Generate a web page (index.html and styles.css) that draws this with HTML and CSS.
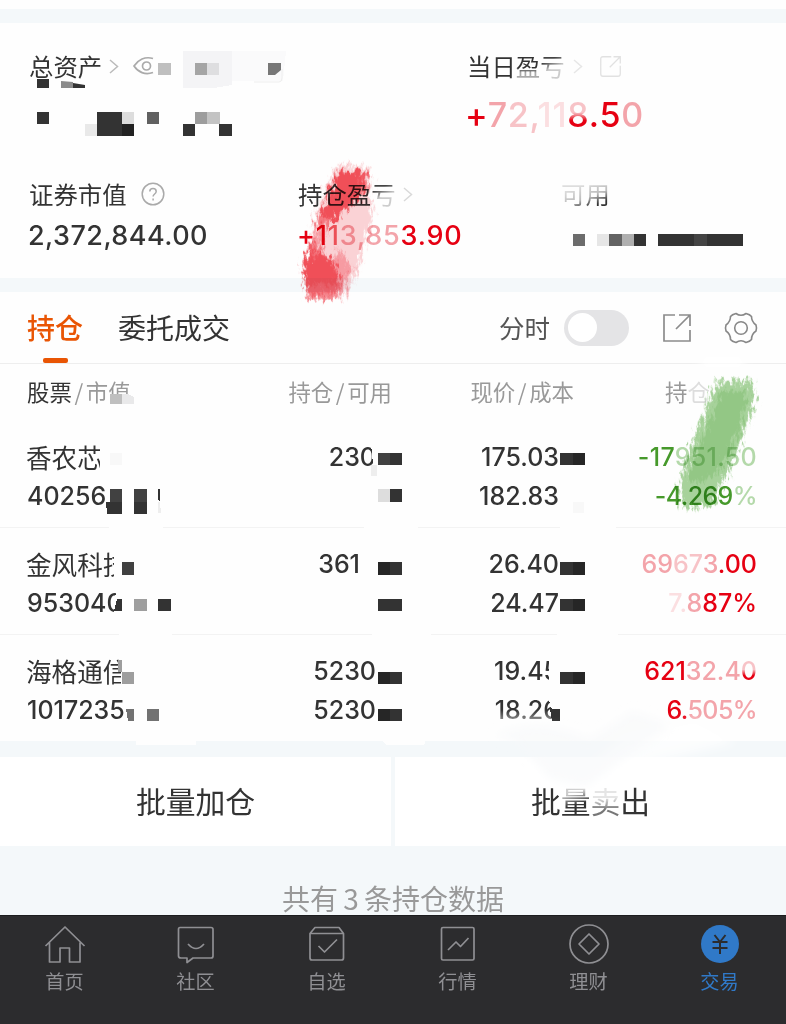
FILE: index.html
```html
<!DOCTYPE html>
<html lang="zh-CN">
<head>
<meta charset="utf-8">
<title>持仓</title>
<link rel="stylesheet" href="styles.css">
</head>
<body>
<main class="page">
  <section class="summary">
    <div class="total">
      <div class="cell">
        <div class="label">总资产
          <svg class="chev" width="10" height="15" viewBox="0 0 10 15"><path d="M1 1l7.5 6.5L1 14"/></svg>
          <svg class="eye" width="21" height="20" viewBox="0 0 21 20"><path d="M20 2.500C12 0 5 4 1 10c4 6 11 9.500 19 6.500"/><circle cx="13.500" cy="10" r="4"/></svg>
        </div>
      </div>
      <div class="cell">
        <div class="label"><span>当日</span><span class="erase-a">盈</span><span class="erase-b">亏</span>
          <svg class="chev faint" width="10" height="15" viewBox="0 0 10 15"><path d="M1 1l7.500 6.500L1 14"/></svg>
          <svg class="open faint" width="21" height="21" viewBox="0 0 28 28"><path d="M15 1H4q-3 0-3 3v20q0 3 3 3h20q3 0 3-3V13M13 15L27 1M18 1h9v9"/></svg>
        </div>
        <div class="big red">+<i class="r2">7</i><i class="r3">2,</i><i class="r4">11</i><i class="fall">8</i>.5<i class="r2">0</i></div>
      </div>
    </div>
    <div class="parts">
      <div class="cell">
        <div class="label">证券市值
          <svg class="help" width="24" height="24" viewBox="0 0 24 24"><circle cx="12" cy="12" r="10.800"/><path d="M8.800 9.500c0-4 6.400-4 6.400 0 0 2.500-3.100 2.500-3.100 5M12.100 16.500v2"/></svg>
        </div>
        <div class="amount">2,372,844.00</div>
      </div>
      <div class="cell">
        <div class="label">持仓盈<span class="erase-b">亏</span>
          <svg class="chev pale" width="10" height="15" viewBox="0 0 10 15"><path d="M1 1l7.500 6.500L1 14"/></svg>
        </div>
        <div class="amount red">+1<i class="r1">1</i><i class="r2">3,85</i>3.90</div>
      </div>
      <div class="cell">
        <div class="label"><span class="erase-c">可用</span></div>
      </div>
    </div>
  </section>

  <section class="holdings">
    <header class="tabs">
      <div class="tab active">持仓</div>
      <div class="tab">委托成交</div>
      <div class="tools">
        <span class="tool-label">分时</span>
        <span class="toggle"><span class="knob"></span></span>
        <svg class="open" width="28" height="28" viewBox="0 0 28 28"><path d="M12 1H1v26h26V16M27 12V1H16M13 15L27 1"/></svg>
        <svg class="gear" width="34" height="32" viewBox="0 0 34 32"><path d="M12 1.500Q17 5 22 1.500Q26 2.500 27.500 4.500Q27.500 9.500 32 13Q33 16 32 19Q27.500 22 27.500 27.500Q26 29.500 22 30.500Q17 27 12 30.500Q8 29.500 6.500 27.500Q6.500 22 2 19Q1 16 2 13Q6.500 9.500 6.500 4.500Q8 2.500 12 1.500Z"/><circle cx="17" cy="16" r="6.300"/></svg>
      </div>
    </header>
    <div class="row head">
      <div><b>股票</b><s>/</s>市值</div><div>持仓<s>/</s>可用</div><div>现价<s>/</s>成本</div><div>持<i class="ghost">仓</i></div>
    </div>
    <div class="row">
      <div><p class="name">香农芯</p><p>40256</p></div>
      <div><p>230</p></div>
      <div><p>175.03</p><p>182.83</p></div>
      <div class="green"><p class="wide">-17<i class="g2">951.50</i></p><p class="tight">-4.269<i class="g2">%</i></p></div>
    </div>
    <div class="row">
      <div><p class="name">金风科技</p><p>953040</p></div>
      <div><p class="short">361</p></div>
      <div><p>26.40</p><p>24.47</p></div>
      <div class="red"><p><i class="r2">69</i><i class="r3">67</i><i class="r2">3</i>.00</p><p><i class="r4">7.</i><i class="r2">8</i>87%</p></div>
    </div>
    <div class="row">
      <div><p class="name">海格通信</p><p>1017235</p></div>
      <div><p>5230</p><p>5230</p></div>
      <div><p>19.45</p><p class="fade-down">18.26</p></div>
      <div class="red"><p>621<i class="r2">32.4</i><i class="fall">0</i></p><p class="tight">6.<i class="r2">505%</i></p></div>
    </div>
  </section>

  <section class="actions">
    <div class="action">批量加仓</div>
    <div class="action">批<span class="erase-d">量</span><span class="erase-e">卖</span>出</div>
  </section>
  <p class="count">共有<span>3</span>条持仓数据</p>

  <nav class="nav">
    <div class="item"><svg width="42" height="42" viewBox="0 0 42 42"><path d="M1.500 22L21 3l19.500 19M5.500 18.500V38h10.500V24h9.500v14H36V18.500"/></svg>首页</div>
    <div class="item"><svg width="42" height="42" viewBox="0 0 42 42"><path d="M5 3.500h31q2 0 2 2v26.500q0 2-2 2H18l-6 4.500V34H6q-2.500 0-2.500-2V5.500q0-2 1.500-2zM13 20q8 9 16 0"/></svg>社区</div>
    <div class="item"><svg width="42" height="42" viewBox="0 0 42 42"><path d="M9 3.500h24l4.500 6V34q0 2-2 2H6q-2 0-2-2V9.500zM4 9.500h33.500M12.500 22l6 6L31 15.500"/></svg>自选</div>
    <div class="item"><svg width="42" height="42" viewBox="0 0 42 42"><rect x="4.500" y="3.500" width="32.500" height="32.500" rx="1.500"/><path d="M11 26l8-8 4.500 4.500L31.500 14"/></svg>行情</div>
    <div class="item"><svg width="42" height="42" viewBox="0 0 42 42"><circle cx="21" cy="20" r="19"/><path d="M21 10l10 10-10 10-10-10z"/></svg>理财</div>
    <div class="item on"><svg width="42" height="42" viewBox="0 0 42 42"><circle class="disc" cx="21" cy="20" r="19"/><path class="yen" d="M15.500 11l5.500 7 5.500-7M21 18v12M13.500 18h15M13.500 24h15"/></svg>交易</div>
  </nav>

  <!-- Redaction blocks and brush marks lie over the content -->
  <svg class="marks" width="786" height="1024" viewBox="0 0 786 1024">
    <defs>
      <filter id="soft"><feGaussianBlur stdDeviation="5"/></filter>
    </defs>
    <g shape-rendering="crispEdges">
      <path fill="#f4f4f6" d="M183 51h49v34l-18 3h-31z"/><path fill="#fafafb" d="M232 51h54l-3 30h-51z"/>
      <path fill="#bfbfbf" d="M158 63h13v12h-13z"/><path fill="#a5a5a5" d="M195 63h12v12h-12z"/><path fill="#dedee0" d="M207 63h12v12h-12z"/>
      <path fill="#333" d="M37 79h12v9H37zM37 112h12v12H37zM97 112h25v24H97zM183 124h12v12h-12zM219 124h13v12h-13z"/>
      <path fill="#222" d="M122 124h12v12h-12z"/><path fill="#ddd" d="M122 112h12v12h-12z"/><path fill="#e9e9e9" d="M85 124h12v12H85z"/>
      <path fill="#616161" d="M147 112h12v12h-12z"/><path fill="#9d9d9d" d="M195 112h12v12h-12z"/><path fill="#c3c3c3" d="M207 112h13v12h-13z"/>
      <path fill="#6c6c6c" d="M573 234h12v12h-12z"/><path fill="#e6e6e6" d="M597 234h12v12h-12z"/><path fill="#636363" d="M609 234h13v12h-13z"/><path fill="#afafaf" d="M622 234h12v12h-12z"/>
      <path fill="#333" d="M634 234h12v12h-12zM658 234h85v12h-85z"/><path fill="#444" d="M694 234h13v12h-13z"/>

      <path fill="#fefefe" d="M100 464l2 18h20v-35h-22v10zM371 444h8v30h-5zM107 502l12-17h44v30h-53zM109 520h54v12h-54zM364 520h54v12h-54zM560 520h56v12h-56zM119 627h53v12h-53zM372 627h59v12h-59zM557 627h61v12h-61zM114 550h14v30h-14zM116 590l-2 22h12v-22zM121 657h14v31h-14zM549 656h14v30h-14zM549 700l6 20h12v-24h-18zM136 740h60v5h-60zM382 740h44l-2 5h-38z"/>
      <path fill="#bfbfbf" d="M110 394h12v10h-12z"/><path fill="#e9e9ea" d="M122 394h6l6 3v7h-12z"/>
      <path fill="#fefefe" d="M130 382h6v12h-6zM98 404h36v3H98z"/>
      <path fill="#f8f8f8" d="M110 453h12v12h-12zM573 502h11v11h-11z"/>
      <path fill="#414141" d="M110 489h12v13h-12zM134 489h13v13h-13zM378 453h12v12h-12z"/><path fill="#333" d="M106 502h16v12h-15zM134 502h13v12h-13zM158 489h2v13l-2-2zM390 453h12v12h-12zM390 489h12v13h-12z"/>
      <path fill="#ddd" d="M378 489h12v13h-12z"/><path fill="#eee" d="M371 465h6v11h-6zM158 502h2l1 11h-3z"/>
      <path fill="#333" d="M560 453h25v12h-25zM378 562h24v13h-24zM560 562h25v13h-25zM378 599h24v12h-24zM560 599h25v12h-25zM378 672h24v12h-24zM560 672h25v12h-25zM378 709h24v12h-24zM550 709h10v12h-8zM117 599h5v12h-8zM158 599h13v12h-13z"/>
      <path fill="#262626" d="M573 453h12v12h-12zM378 562h12v13h-12zM573 562h12v13h-12zM573 599h12v12h-12zM378 672h12v12h-12zM573 672h12v12h-12zM378 709h12v12h-12z"/>
      <path fill="#404040" d="M122 562h12v13h-12z"/><path fill="#9e9e9e" d="M134 599h13v12h-13zM122 672h12v12h-12zM118 660h4v12h-4z"/>
      <path fill="#727272" d="M126 709h8v12h-6zM147 709h12v12h-12z"/>
    </g>
    <path fill="#777" d="M268 63h13v7l-6 5h-7z"/><path fill="#8b8b8b" d="M61 81l12 1v6H61z"/><path fill="#333" d="M73 83l12 2v3H73z"/>
    <path d="M254 82h25q3 0 3-4v-9" fill="none" stroke="#eee"/>

    <g filter="url(#soft)"><path fill="#fff" fill-opacity=".7" d="M625 737l70-17 40 22-80 20-38 22-30-18zM700 354h45v16h-45z"/><path fill="#f6f8fa" fill-opacity=".55" d="M495 735q45-20 95 4l43-28 38 14-60 43-25 19-35-8-34-36z"/></g>
  </svg>

  <svg class="marks brush" width="786" height="1024" viewBox="0 0 786 1024">
    <defs>
      <filter id="rough" x="-30%" y="-20%" width="160%" height="140%" color-interpolation-filters="sRGB">
        <feTurbulence type="fractalNoise" baseFrequency=".3 .12" numOctaves="3" seed="4" result="n"/>
        <feGaussianBlur in="SourceGraphic" stdDeviation="1.500" result="b"/>
        <feDisplacementMap in="b" in2="n" scale="18" xChannelSelector="R" yChannelSelector="G"/>
        <feGaussianBlur stdDeviation=".6"/>
      </filter>
    </defs>
    <g filter="url(#rough)">
      <path fill="#fbd3d6" d="M339 164l31 4 2 50-17 59-10 20-38 3-5-29 15-62 13-28z"/>
      <path fill="#f14f58" d="M340 170l28 2-6 23-22 20-20 14-4-5 11-26zM313 238l11 15 11 9 7 15-5 16-31 2-3-27z"/>
      <path fill="#f58a91" fill-opacity=".75" d="M318 215l10 4-7 32-8 6zM337 248l10 12 6 9-9 10-11-15zM340 276l9 1-7 18-8 0z"/>
      <path fill="#f36b74" fill-opacity=".7" d="M364 171l5 3-2 18-7 2zM304 284h34l-3 16h-27z"/>
    </g>
    <g filter="url(#rough)">
      <path fill="#a8d39c" d="M718 381l35 0 2 20-20 57-24 48-27 3-6-20 15-47 16-42z"/>
      <path fill="#94c886" d="M721 392l26-1-6 36-22 45-23 12-9-8 13-33z"/>
    </g>
  </svg>
</main>
</body>
</html>
```
FILE: styles.css
```css
* { box-sizing: border-box; }
body { margin: 0; background: #f4f8fa; }
p { margin: 0; }
i, s { font-style: normal; text-decoration: none; }
b { font-weight: 400; }
svg { fill: none; flex: none; }

.page {
  position: relative;
  width: 786px;
  height: 1024px;
  overflow: hidden;
  display: flex;
  flex-direction: column;
  border-top: 9px solid #fefefe;
  font-family: Inter, "Noto Sans CJK SC", sans-serif;
  color: #333;
}
.marks { position: absolute; left: 0; top: -9px; pointer-events: none; }
.brush { mix-blend-mode: multiply; }

.summary { margin-top: 14px; height: 255px; padding-top: 25px; background: #fefefe; }
.total { display: grid; grid-template-columns: 438px 1fr; padding-left: 29px; height: 128px; }
.parts { display: grid; grid-template-columns: 269px 263px 1fr; padding-left: 29px; }
.label { display: flex; align-items: center; height: 36px; line-height: 34px; font-size: 24.4px; font-family: "Noto Sans CJK SC", sans-serif; }
.label > span { line-height: 34px; }
.big { margin: 9px 0 0 -2px; line-height: 44px; font-size: 34px; font-weight: 500; letter-spacing: .75px; }
.amount { margin: 5px 0 0 -1px; line-height: 37px; font-size: 27px; font-weight: 500; letter-spacing: .45px; }
.amount.red { letter-spacing: .8px; }

.chev { margin-left: 7px; stroke: #bbb; stroke-width: 1.5; }
.chev.faint { margin-left: 8px; opacity: .35; }
.chev.pale { opacity: .55; }
.eye { margin-left: 14px; stroke: #aaa; stroke-width: 1.7; }
.help { margin-left: 14px; stroke: #aaa; stroke-width: 1.5; }
.open { stroke: #8c8c8c; stroke-width: 1.7; }
.open.faint { margin-left: 17px; opacity: .25; }
.gear { stroke: #888; stroke-width: 1.6; margin-left: 33px; }

.red { color: #e60012; }
.green { color: #46992b; }
.r1 { color: #f06068; }
.r2 { color: #f3a4aa; }
.r3 { color: #f7c3c7; }
.r4 { color: #fbdfe1; }
.g2 { color: #b4d9aa; }
.ghost { color: #ddd; }
.fall, .erase-a, .erase-b, .erase-c, .erase-d, .erase-e, .fade-down { color: transparent; background-clip: text; -webkit-background-clip: text; }
.fall { background-image: linear-gradient(#f7c3c7 45%, #e60012 65%); }
.erase-a { background-image: linear-gradient(#333 55%, #aaa 70%); }
.erase-b { background-image: linear-gradient(155deg, #444 34%, #ccc 56%); }
.erase-c { background-image: linear-gradient(160deg, #ddd 30%, #bbb 58%, #333 78%); }
.erase-d { background-image: linear-gradient(165deg, #ccc 35%, #333 60%); }
.erase-e { background-image: linear-gradient(#e5e5e5 45%, #777 72%); }
.fade-down { background-image: linear-gradient(#333 50%, #888 75%); }

.holdings { margin-top: 14px; height: 449px; background: #fefefe; }
.tabs { display: flex; align-items: center; height: 72px; padding: 0 28px 0 27px; border-bottom: 1px solid #eee; font-family: "Noto Sans CJK SC", sans-serif; font-size: 28px; }
.tab { display: flex; flex-direction: column; align-items: center; height: 71px; line-height: 71px; margin-right: 35px; }
.tab.active { color: #e95504; font-weight: 500; }
.tab.active::after { content: ""; width: 25px; height: 5px; border-radius: 2px; background: #e95504; margin-top: -5px; }
.tools { display: flex; align-items: center; margin-left: auto; }
.tool-label { font-size: 25.5px; color: #555; line-height: 34px; padding-bottom: 2px; }
.toggle { width: 65px; height: 36px; padding: 3.500px; margin: 0 34px 0 14px; border-radius: 18px; background: #e4e4e6; }
.knob { display: block; width: 29px; height: 29px; border-radius: 50%; background: #fff; }

.row { display: grid; grid-template-columns: 200px 149px 183px 197px; padding: 17px 30px 0 27px; height: 107px; line-height: 38.500px; font-size: 25px; font-weight: 500; border-bottom: 1px solid #f3f3f3; }
.row:last-child { border-bottom: 0; }
.row > div:nth-child(n+2) { text-align: right; }
.row > div:last-child { margin-right: -1px; }
.row p.name { margin-left: -1px; font: 400 25.600px/38.500px "Noto Sans CJK SC", sans-serif; }
.row .short { padding-right: 16px; }
.row .wide { letter-spacing: .3px; }
.row .tight { letter-spacing: -.6px; }
.row.head { grid-template-columns: 200px 165px 182px 183px; height: 57px; padding-top: 0; border: 0; font: 400 22.400px/55px "Noto Sans CJK SC", sans-serif; color: #999; }
.row.head b { color: #333; }
.row.head s { display: inline-block; width: 14px; text-align: center; }
.row.head > div:last-child { text-align: left; padding-left: 91px; }

.actions { display: grid; grid-template-columns: 1fr 1fr; gap: 4px; margin-top: 16px; height: 89px; }
.action { background: #fff; text-align: center; font: 400 29.800px/87px "Noto Sans CJK SC", sans-serif; }
.action, .action span { letter-spacing: -.1px; }
.count { height: 69px; padding-top: 31px; text-align: center; font: 400 28px/42px "Noto Sans CJK SC", sans-serif; color: #999; }
.count span { display: inline-block; width: 26px; }
.nav { display: grid; grid-template-columns: repeat(6, 131px); height: 109px; margin-left: -1px; padding-top: 8px; background: #2c2c2e; border-top: 1px solid #1c1c1e; width: 787px; }
.item { display: flex; flex-direction: column; align-items: center; color: #8f8f93; font: 400 19.200px/30px "Noto Sans CJK SC", sans-serif; }
.item svg { stroke: #8f8f93; stroke-width: 1.700; stroke-linejoin: round; }
.item.on { color: #3079c8; }
.item .disc { fill: #3079c8; stroke: none; }
.item .yen { stroke: #2c2c2e; stroke-width: 2; }
```
